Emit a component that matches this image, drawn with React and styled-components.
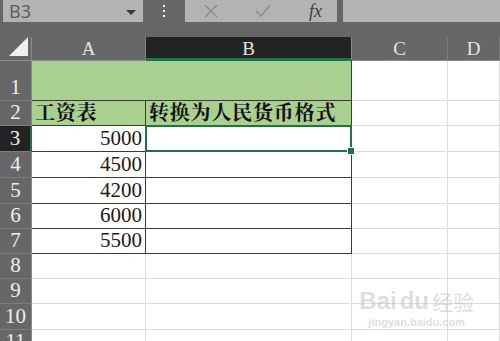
import React from 'react';
import styled, { createGlobalStyle } from 'styled-components';

const Global = createGlobalStyle`
  html, body { margin: 0; padding: 0; background: #ffffff; overflow: hidden; }
  body { width: 500px; height: 341px; font-family: "Liberation Serif", serif; }
`;

const Page = styled.div`
  position: relative;
  width: 500px;
  height: 341px;
  overflow: hidden;
`;

// formula bar
const TopBar = styled.div`
  height: 37px;
  background: #676767;
  display: flex;
  align-items: flex-start;
`;

const NameBox = styled.div`
  margin-left: 3px;
  width: 140px;
  height: 22px;
  flex-shrink: 0;
  background: #b3b3b3;
  display: flex;
  align-items: center;
  justify-content: space-between;
  padding: 0 7px 0 6px;
  box-sizing: border-box;
  font-family: "Open Sans", "Liberation Sans", sans-serif;
  font-size: 18px;
  line-height: 22px;
  color: #5a5a5a;
`;

const Caret = styled.span`
  width: 0;
  height: 0;
  border-left: 5px solid transparent;
  border-right: 5px solid transparent;
  border-top: 5px solid #3a3a3a;
  margin-top: 2px;
`;

const Grip = styled.div`
  width: 42px;
  height: 22px;
  flex-shrink: 0;
  display: flex;
  flex-direction: column;
  align-items: center;
  justify-content: center;
  gap: 3px;
  span { width: 2px; height: 2px; background: #f0f0f0; }
`;

const Tools = styled.div`
  width: 152px;
  height: 22px;
  flex-shrink: 0;
  background: #b3b3b3;
  display: flex;
  align-items: center;
  padding-left: 18px;
  box-sizing: border-box;
  gap: 35px;
`;

const Fx = styled.span`
  font-family: "Liberation Serif", serif;
  font-style: italic;
  font-size: 18px;
  color: #3d3d3d;
  margin-left: 2px;
`;

const Formula = styled.div`
  flex: 1;
  margin-left: 6px;
  height: 22px;
  background: #b3b3b3;
`;

// grid
const Row = styled.div`
  display: flex;
  height: ${p => p.$h}px;
`;

const Corner = styled.div`
  width: 32px;
  flex-shrink: 0;
  height: 100%;
  background: #676767;
  box-sizing: border-box;
  border-right: 1px solid #8a8a8a;
  border-bottom: 1px solid #8a8a8a;
  display: flex;
  align-items: flex-end;
  justify-content: flex-end;
  padding: 0 3px 4px 0;
  &::after {
    content: '';
    width: 0;
    height: 0;
    border-left: 19px solid transparent;
    border-bottom: 19px solid #efefef;
  }
`;

const ColHead = styled.div`
  width: ${p => p.$w}px;
  flex-shrink: 0;
  flex-grow: ${p => (p.$grow ? 1 : 0)};
  height: 100%;
  box-sizing: border-box;
  background: ${p => (p.$active ? '#232323' : '#676767')};
  border-right: 1px solid ${p => (p.$active ? '#8a8a8a' : '#7d7d7d')};
  border-bottom: ${p => (p.$active ? '3px solid #217346' : '1px solid #8a8a8a')};
  color: #e4e4e4;
  font-family: "Liberation Serif", serif;
  font-size: 19px;
  display: flex;
  align-items: center;
  justify-content: center;
  padding-top: ${p => (p.$active ? 3 : 1)}px;
`;

const RowHead = styled.div`
  width: 32px;
  flex-shrink: 0;
  height: 100%;
  box-sizing: border-box;
  background: ${p => (p.$active ? '#232323' : '#676767')};
  border-right: ${p => (p.$active ? '2px solid #217346' : '1px solid #8a8a8a')};
  border-bottom: 1px solid #7d7d7d;
  color: #eeeeee;
  font-family: "Liberation Serif", serif;
  font-size: 21px;
  line-height: 24px;
  display: flex;
  align-items: flex-end;
  justify-content: center;
  padding-bottom: 1px;
`;

const Cell = styled.div`
  position: relative;
  width: ${p => p.$w}px;
  flex-shrink: ${p => (p.$grow ? 1 : 0)};
  flex-grow: ${p => (p.$grow ? 1 : 0)};
  height: 100%;
  box-sizing: border-box;
  background: ${p => (p.$fill ? '#a9d08e' : '#ffffff')};
  border-right: 1px solid ${p => (p.$dark ? '#3a3a3a' : '#dcdcdc')};
  border-bottom: 1px solid ${p => (p.$dark ? '#3a3a3a' : '#dcdcdc')};
  display: flex;
  align-items: flex-end;
  justify-content: ${p => (p.$num ? 'flex-end' : 'flex-start')};
  padding: 0 3px 1px 3px;
  font-family: "Liberation Serif", serif;
  font-size: 21px;
  line-height: 24px;
  color: #1a1a1a;
  ${p => p.$selected && `
    &::after {
      content: '';
      position: absolute;
      left: -1px;
      top: -1px;
      right: -1px;
      bottom: -1px;
      border: 2px solid #217346;
    }
    &::before {
      content: '';
      position: absolute;
      right: -4px;
      bottom: -4px;
      width: 6px;
      height: 6px;
      background: #217346;
      border: 1px solid #ffffff;
      z-index: 2;
    }
  `}
`;

const Han = styled.span`
  font-family: "Noto Serif CJK SC", "Noto Sans CJK SC", serif;
  font-weight: 700;
  font-size: 20px;
  letter-spacing: 0.8px;
  line-height: 24px;
  color: #111;
`;

const Watermark = styled.div`
  position: absolute;
  right: 26px;
  bottom: 12px;
  display: flex;
  flex-direction: column;
  align-items: center;
  color: rgba(190, 190, 190, 0.5);
  font-family: "Liberation Sans", sans-serif;
  pointer-events: none;
`;

const Mark = styled.div`
  font-size: 24px;
  font-weight: 700;
  line-height: 28px;
  display: flex;
  align-items: center;
  gap: 3px;
  span.cn { font-family: "Noto Sans CJK SC", sans-serif; font-weight: 400; font-size: 21px; }
`;

const Site = styled.div`
  font-size: 11px;
  font-weight: 700;
  line-height: 14px;
`;

const W = { A: 114, B: 206, C: 96 };
const heights = [40, 25, 26, 26, 26, 25, 25, 25, 25, 26, 25];
const values = { 3: '5000', 4: '4500', 5: '4200', 6: '6000', 7: '5500' };

const X = () => (
  <svg width="16" height="16" viewBox="0 0 16 16">
    <path d="M2 2 L14 14 M14 2 L2 14" stroke="#8e8e8e" strokeWidth="1.6" fill="none" />
  </svg>
);

const Check = () => (
  <svg width="18" height="16" viewBox="0 0 18 16">
    <path d="M2 8 L7 13 L16 2" stroke="#8e8e8e" strokeWidth="1.6" fill="none" />
  </svg>
);

export default function App() {
  return (
    <Page>
      <Global />
      <TopBar>
        <NameBox>B3<Caret /></NameBox>
        <Grip><span /><span /><span /></Grip>
        <Tools><X /><Check /><Fx>fx</Fx></Tools>
        <Formula />
      </TopBar>
      <Row $h={24}>
        <Corner />
        <ColHead $w={W.A}>A</ColHead>
        <ColHead $w={W.B} $active>B</ColHead>
        <ColHead $w={W.C}>C</ColHead>
        <ColHead $w={0} $grow>D</ColHead>
      </Row>
      {heights.map((h, i) => {
        const r = i + 1;
        const inTable = r <= 7;
        if (r === 1) {
          return (
            <Row key={r} $h={h}>
              <RowHead>1</RowHead>
              <Cell $w={W.A + W.B} $fill $dark />
              <Cell $w={W.C} />
              <Cell $grow />
            </Row>
          );
        }
        return (
          <Row key={r} $h={h}>
            <RowHead $active={r === 3}>{r}</RowHead>
            <Cell $w={W.A} $fill={r === 2} $dark={inTable} $num={r > 2}>
              {r === 2 ? <Han>工资表</Han> : values[r]}
            </Cell>
            <Cell $w={W.B} $fill={r === 2} $dark={inTable} $selected={r === 3}>
              {r === 2 && <Han>转换为人民货币格式</Han>}
            </Cell>
            <Cell $w={W.C} />
            <Cell $grow />
          </Row>
        );
      })}
      <Watermark>
        <Mark>Bai<span>du</span><span className="cn">经验</span></Mark>
        <Site>jingyan.baidu.com</Site>
      </Watermark>
    </Page>
  );
}
